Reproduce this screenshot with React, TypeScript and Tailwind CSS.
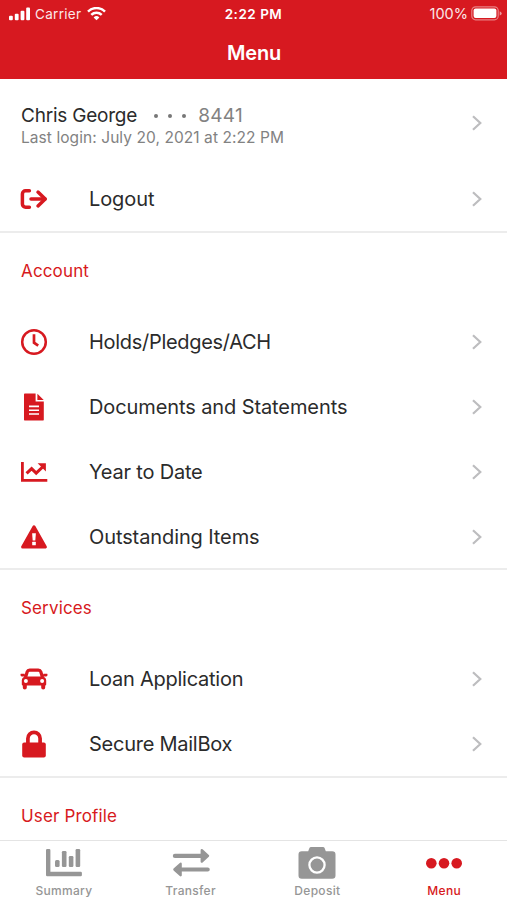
import type { ReactNode } from "react";

function LogoutIcon() {
  return (
    <svg width="28" height="22" viewBox="0 0 28 22" fill="none" stroke="currentColor" strokeWidth="3.5" strokeLinecap="round" strokeLinejoin="round">
      <path d="M9.4 2.7H5.6a3.2 3.2 0 0 0-3.2 3.2v10.2a3.2 3.2 0 0 0 3.2 3.2h3.8" />
      <path d="M11 11h14" />
      <path d="M18 4.1 25.2 11 18 17.9" />
    </svg>
  );
}

function ClockIcon() {
  return (
    <svg width="28" height="28" viewBox="0 0 28 28" fill="none" stroke="currentColor">
      <circle cx="14" cy="14" r="11.8" strokeWidth="2.5" />
      <path d="M14 6.3v8.4l4.2 3" strokeWidth="2.7" />
    </svg>
  );
}

function DocumentIcon() {
  return (
    <svg width="28" height="28" viewBox="0 0 28 28">
      <path d="M4.8.6h10.8v8h8.2v18.2q0 .6-.6.6H4.6q-.6 0-.6-.6V1.4q0-.8.8-.8Z" fill="currentColor" />
      <path d="M17.4.8 23.7 7h-6.3Z" fill="currentColor" />
      <path d="M9 13.4h10M9 17.2h10M9 21h10" stroke="#fff" strokeWidth="1.6" />
    </svg>
  );
}

function TrendIcon() {
  return (
    <svg width="28" height="22" viewBox="0 0 28 22" fill="none" stroke="currentColor" strokeWidth="2.8">
      <path d="M2.4 1v18.3h24.9" />
      <path d="m6.6 12.4 5-4.8 4.6 4.6 6.4-6.2" strokeWidth="3.1" />
      <path d="M17.6 2.2h8.3v8.3Z" fill="currentColor" stroke="none" />
    </svg>
  );
}

function WarningIcon() {
  return (
    <svg width="28" height="26" viewBox="0 0 28 26">
      <path d="M14 2.8 25.4 23H2.6Z" fill="currentColor" stroke="currentColor" strokeWidth="3" strokeLinejoin="round" />
      <path d="M12.1 9.2h3.8l-.6 7.2h-2.6Z" fill="#fff" />
      <rect x="12.2" y="17.8" width="3.6" height="3.5" rx="0.5" fill="#fff" />
    </svg>
  );
}

function CarIcon() {
  return (
    <svg width="28" height="22" viewBox="0 0 28 22">
      <path d="M5.4 10 7.2 3.8Q7.8 2.2 9.6 2.2h8.8q1.8 0 2.4 1.6L22.6 10" fill="none" stroke="currentColor" strokeWidth="3.2" />
      <path
        d="M5.5 8.4h17q3.4.6 3.7 3.8v4.2q0 1-1 1v2a2 2 0 0 1-4 0v-2H6.8v2a2 2 0 0 1-4 0v-2q-1 0-1-1v-4.2q.3-3.2 3.7-3.8Z"
        fill="currentColor"
      />
      <path d="M1 5.8h3.6l.8 2.8H1.8Q.5 8.4.5 7t.5-1.2ZM27 5.8h-3.6l-.8 2.8h3.6q1.3-.2 1.3-1.6T27 5.8Z" fill="currentColor" />
      <circle cx="5.9" cy="13" r="2" fill="#fff" />
      <circle cx="22.1" cy="13" r="2" fill="#fff" />
    </svg>
  );
}

function LockIcon() {
  return (
    <svg width="28" height="28" viewBox="0 0 28 28">
      <path d="M7.9 14V8.4a6.1 6.1 0 0 1 12.2 0V14" fill="none" stroke="currentColor" strokeWidth="3.7" />
      <rect x="2.2" y="12.4" width="23.6" height="15" rx="2" fill="currentColor" />
    </svg>
  );
}

function SummaryIcon() {
  return (
    <svg width="38" height="32" viewBox="0 0 38 32" fill="currentColor">
      <path d="M2.2 2h2q1.2 0 1.2 1.2v21.5h30.3q1.2 0 1.2 1.2V28q0 1.2-1.2 1.2H2.2Q1 29.200 1 28V3.200Q1 2 2.200 2Z" />
      <rect x="10" y="13" width="4.6" height="7" rx="1.5" />
      <rect x="16.9" y="4" width="4.6" height="16" rx="1.2" />
      <rect x="23.8" y="9" width="4.6" height="11" rx="1.2" />
      <rect x="30.600" y="2" width="4.6" height="18" rx="1.2" />
    </svg>
  );
}

function TransferIcon() {
  return (
    <svg width="38" height="32" viewBox="0 0 38 32">
      <path d="M2.9 8.900h26M9.500 22.500h26.200" stroke="currentColor" strokeWidth="4.200" strokeLinecap="round" />
      <path
        d="M29.800 3.200 36 8.900l-6.200 5.700ZM8.600 16.800 2.400 22.500l6.200 5.700Z"
        fill="currentColor"
        stroke="currentColor"
        strokeWidth="2.4"
        strokeLinejoin="round"
      />
    </svg>
  );
}

function CameraIcon() {
  return (
    <svg width="38" height="32" viewBox="0 0 38 32">
      <path
        d="M13.200 0h11.600q1.500 0 2 1.400L27.800 4.200h6.400q3.300 0 3.300 3.300v21q0 3.300-3.300 3.300H3.800Q.5 31.800.5 28.500v-21q0-3.300 3.300-3.300h6.400l1-2.800Q11.700 0 13.200 0Z"
        fill="currentColor"
      />
      <circle cx="19" cy="18" r="7.600" fill="none" stroke="#fff" strokeWidth="2.3" />
    </svg>
  );
}

function MoreIcon() {
  return (
    <svg width="38" height="32" viewBox="0 0 38 32" fill="currentColor">
      <circle cx="6.3" cy="16.3" r="5.3" />
      <circle cx="19" cy="16.3" r="5.3" />
      <circle cx="31.700" cy="16.3" r="5.3" />
    </svg>
  );
}

function Chevron() {
  return (
    <svg width="12" height="18" viewBox="0 0 12 18" fill="none" stroke="#bdbdbf" strokeWidth="2.2">
      <path d="m2 2.2 7.3 6.8L2 15.8" />
    </svg>
  );
}

function StatusBar() {
  return (
    <div className="grid h-[27px] grid-cols-3 items-center text-[13.5px]">
      <div className="flex items-center pl-[9px]">
        <svg width="22" height="14" viewBox="0 0 22 14" fill="currentColor">
          <rect x="0" y="8.7" width="3.8" height="4.6" rx="1" />
          <rect x="5.8" y="6.700" width="3.8" height="6.600" rx="1" />
          <rect x="11.6" y="3.700" width="3.8" height="9.600" rx="1" />
          <rect x="17.2" y="0.500" width="3.8" height="12.800" rx="1" />
        </svg>
        <span className="ml-1 pt-px tracking-[0.3px] opacity-90">Carrier</span>
        <svg className="ml-1.5" width="19" height="14" viewBox="0 0 19 14" fill="none" stroke="currentColor" strokeWidth="2.5">
          <path d="M1 4.600a12 12 0 0 1 17 0" />
          <path d="M4.300 7.900a7.400 7.400 0 0 1 10.400 0" />
          <path d="M9.500 13.300 6.600 10.400a4.100 4.100 0 0 1 5.800 0Z" fill="currentColor" stroke="none" />
        </svg>
      </div>
      <span className="pt-px text-center font-semibold tracking-[0.5px]">2:22 PM</span>
      <div className="flex items-center justify-end pr-[5px]">
        <span className="pt-px text-[14.5px] opacity-90">100%</span>
        <svg className="ml-[3px]" width="31" height="15" viewBox="0 0 31 15">
          <rect x="0.8" y="0.800" width="26.400" height="13" rx="3.800" fill="none" stroke="#fff" strokeOpacity="0.45" strokeWidth="1.2" />
          <rect x="2.600" y="2.600" width="22.800" height="9.400" rx="2" fill="#fff" />
          <path d="M28.700 5.200q2 .7 2 2.200t-2 2.200Z" fill="#fff" fillOpacity="0.55" />
        </svg>
      </div>
    </div>
  );
}

type MenuRowProps = {
  icon: ReactNode;
  label: string;
  tracking?: string;
};

function MenuRow({ icon, label, tracking = "tracking-[-0.1px]" }: MenuRowProps) {
  return (
    <div className="flex h-[65px] items-center pr-[24px] pb-[2px] pl-5">
      <span className="flex w-7 justify-center text-[#d71920]">{icon}</span>
      <span className={`ml-[41px] flex-1 text-[20px] text-[#2b2b2b] ${tracking}`}>{label}</span>
      <Chevron />
    </div>
  );
}

function SectionTitle({ children }: { children: ReactNode }) {
  return (
    <h2 className="flex h-[77px] items-center pl-[21px] text-[17px] tracking-[0.15px] text-[#d71920]">{children}</h2>
  );
}

function Tab({ icon, label, active }: { icon: ReactNode; label: string; active?: boolean }) {
  return (
    <div className={`flex flex-1 flex-col items-center pt-[6px] pl-[1px] ${active ? "text-[#d71920]" : "text-[#969696]"}`}>
      <span className="flex h-8 items-center">{icon}</span>
      <span className="mt-[4px] text-[12px] leading-4 font-medium tracking-[0.3px]">{label}</span>
    </div>
  );
}

export default function App() {
  return (
    <div className="flex h-[900px] w-[507px] flex-col overflow-hidden bg-white font-['Inter',sans-serif]">
      <header className="h-[79px] shrink-0 bg-[#d71920] text-white">
        <StatusBar />
        <h1 className="flex h-[51px] items-center justify-center pl-px text-[20px] font-semibold tracking-[-0.2px]">Menu</h1>
      </header>

      <main className="min-h-0 flex-1 overflow-hidden">
        <section className="h-[154px] border-b-2 border-[#ececec]">
          <div className="flex h-[88px] items-center pr-[24px] pl-[21px]">
            <div className="flex-1 pt-[5px]">
              <div className="flex items-center text-[19px] leading-[24px]">
                <span className="tracking-[-0.22px] text-[#2b2b2b]">Chris George</span>
                <span className="ml-[17px] flex gap-[10px]">
                  <i className="size-1 rounded-full bg-[#777]" />
                  <i className="size-1 rounded-full bg-[#777]" />
                  <i className="size-1 rounded-full bg-[#777]" />
                </span>
                <span className="ml-3 tracking-[0.3px] text-[#828282]">8441</span>
              </div>
              <p className="text-[15.5px] leading-5 tracking-[0.07px] text-[#828282]">
                Last login: July 20, 2021 at 2:22 PM
              </p>
            </div>
            <Chevron />
          </div>
          <MenuRow icon={<LogoutIcon />} label="Logout" />
        </section>

        <section className="h-[337px] border-b-2 border-[#ececec]">
          <SectionTitle>Account</SectionTitle>
          <MenuRow icon={<ClockIcon />} label="Holds/Pledges/ACH" tracking="tracking-[-0.3px]" />
          <MenuRow icon={<DocumentIcon />} label="Documents and Statements" />
          <MenuRow icon={<TrendIcon />} label="Year to Date" tracking="tracking-[-0.2px]" />
          <MenuRow icon={<WarningIcon />} label="Outstanding Items" />
        </section>

        <section className="h-[208px] border-b-2 border-[#ececec]">
          <SectionTitle>Services</SectionTitle>
          <MenuRow icon={<CarIcon />} label="Loan Application" tracking="tracking-[-0.25px]" />
          <MenuRow icon={<LockIcon />} label="Secure MailBox" tracking="tracking-[-0.25px]" />
        </section>

        <section>
          <SectionTitle>User Profile</SectionTitle>
        </section>
      </main>

      <nav className="flex h-[60px] shrink-0 border-t border-[#e4e4e4] bg-white">
        <Tab icon={<SummaryIcon />} label="Summary" />
        <Tab icon={<TransferIcon />} label="Transfer" />
        <Tab icon={<CameraIcon />} label="Deposit" />
        <Tab icon={<MoreIcon />} label="Menu" active />
      </nav>
    </div>
  );
}
